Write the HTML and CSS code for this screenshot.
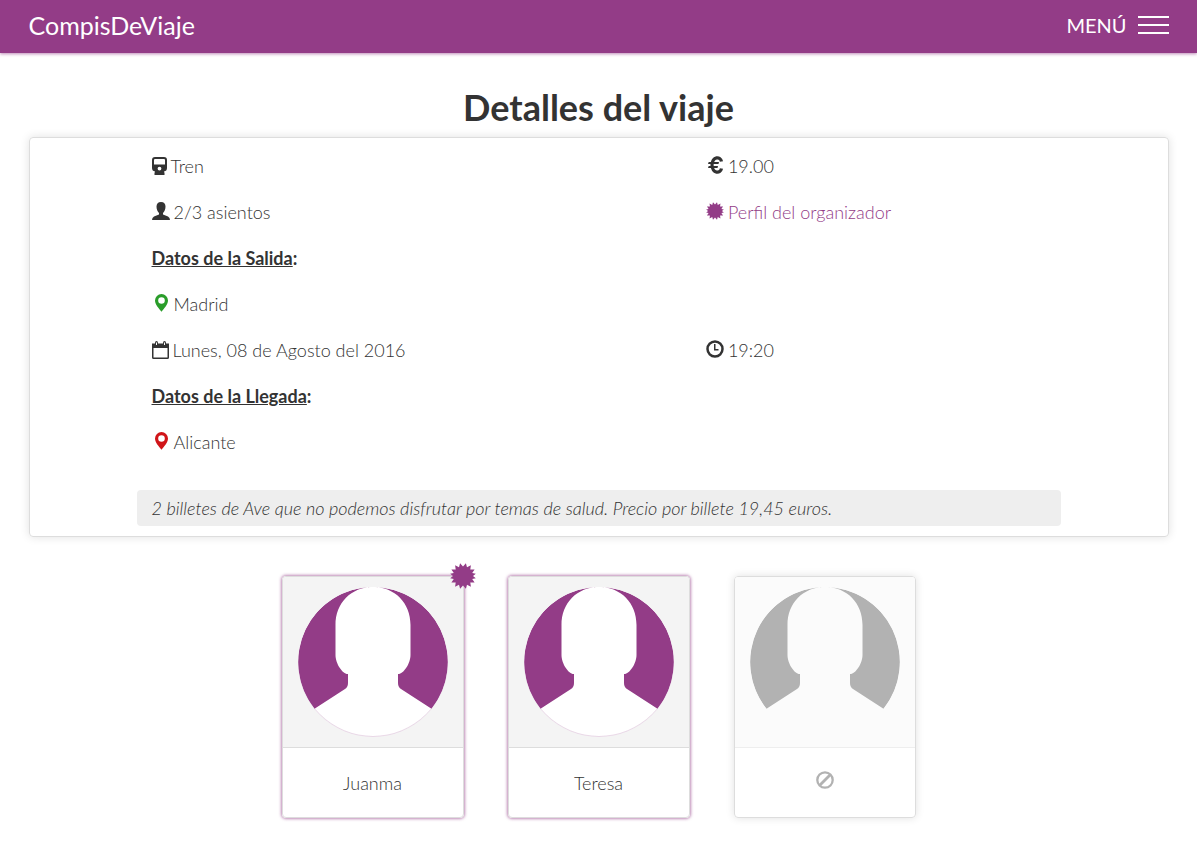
FILE: index.html
```html
<!DOCTYPE html>
<html lang="es">
<head>
<meta charset="utf-8">
<title>CompisDeViaje</title>
<meta name="viewport" content="width=device-width, initial-scale=1">
<link rel="stylesheet" href="styles.css">
</head>
<body>
<svg class="sprite" aria-hidden="true">
  <symbol id="star" viewBox="-13 -13 26 26">
    <path d="M0-9.500L2.900-12.700L4-8.800L7.900-10.800L7.300-6.400L11.600-6.500L9.200-3L12.800-2.200L10 0L12.800 2.200L9.200 3L11.600 6.500L7.300 6.400L7.900 10.800L4 8.800L2.900 12.700L0 9.500L-2.900 12.700L-4 8.800L-7.900 10.800L-7.300 6.400L-11.600 6.500L-9.200 3L-12.800 2.200L-10 0L-12.800-2.200L-9.200-3L-11.600-6.500L-7.300-6.400L-7.900-10.800L-4-8.800L-2.900-12.700Z"/>
  </symbol>
  <symbol id="pin" viewBox="0 0 18 18">
    <path fill-rule="evenodd" d="M9.500 0A6.500 6.500 0 0 0 3 6.500C3 10.500 7 14.500 9.500 17.800C12 14.500 16 10.500 16 6.500A6.500 6.500 0 0 0 9.500 0ZM9.500 3.200A3.300 3.300 0 1 1 9.500 9.800A3.300 3.300 0 1 1 9.500 3.200Z"/>
  </symbol>
  <symbol id="avatar" viewBox="0 0 150 150">
    <path d="M75 0A75 75 0 0 0 16.500 121.700L47 102Q50 100 50 96V87C45 87.500 37.500 77 37.500 68V38C37.500 16 53 0 75 0C97 0 112.500 16 112.500 38V68C112.500 77 105 87.500 100 87V96Q100 100 103 102L133.500 121.700A75 75 0 0 0 75 0Z"/>
  </symbol>
</svg>

<header class="navbar">
  <div class="container navbar-inner">
    <a class="brand" href="#">CompisDeViaje</a>
    <button class="menu" type="button">MENÚ
      <span class="bars"><span class="bar"></span><span class="bar"></span><span class="bar"></span></span>
    </button>
  </div>
</header>

<main class="container">
  <h1 class="title">Detalles del viaje</h1>

  <section class="panel">
    <div class="details">
      <div class="item">
        <svg class="icon icon-train" viewBox="0 0 15 18"><path fill-rule="evenodd" d="M3 0H12Q15 0 15 3V11Q15 14 12 14.500L12.500 16V18H2.500V16L3 14.500Q0 14 0 11V3Q0 0 3 0ZM3 2Q2 2 2 3V7.500H13V3Q13 2 12 2ZM7.500 9.700A1.900 1.900 0 1 0 7.500 13.500A1.900 1.900 0 1 0 7.500 9.700Z"/></svg>
        Tren
      </div>
      <div class="item">
        <svg class="icon" viewBox="0 0 18 18"><path d="M9 0C6 0 4.500 2 4.500 4.500C4.500 7.500 5.500 9.500 7 11V12.500L2 14.500Q0 15.500 0 18H18Q18 15.500 16 14.500L11 12.500V11C12.500 9.500 13.500 7.500 13.500 4.500C13.500 2 12 0 9 0Z"/></svg>
        2/3 asientos
      </div>
      <div class="item side">
        <svg class="icon" viewBox="0 0 18 18"><path fill="none" stroke="currentColor" stroke-width="3.200" d="M15.500 5.500C14.500 .3 6.500 0 6 9C6.500 18 14.500 17.700 15.500 12.500"/><path d="M2.700 6H13L12.500 8H2ZM2.700 10H12L11.500 12H2Z"/></svg>
        19.00
      </div>
      <a class="item side profile" href="#"><svg class="icon"><use href="#star"/></svg>Perfil del organizador</a>
      <h2 class="item heading"><u>Datos de la Salida</u>:</h2>
      <div class="item"><svg class="icon from"><use href="#pin"/></svg>Madrid</div>
      <div class="item">
        <svg class="icon icon-date" viewBox="0 0 17 18"><path fill-rule="evenodd" d="M0 2.500H3V2Q3 0 4.500 0T6 2V2.500H11V2Q11 0 12.500 0T14 2V2.500H17V16.500Q17 18 15.500 18H1.500Q0 18 0 16.500ZM1.500 7V16.500H15.500V7ZM4 1.500V4H5V1.500ZM12 1.500V4H13V1.500Z"/></svg>
        Lunes, 08 de Agosto del 2016
      </div>
      <div class="item side">
        <svg class="icon" viewBox="0 0 18 18"><circle cx="9" cy="9" r="7.500" fill="none" stroke="currentColor" stroke-width="2.500"/><path d="M8 4H9.500V9H12.500V10.500H8Z"/></svg>
        19:20
      </div>
      <h2 class="item heading"><u>Datos de la Llegada</u>:</h2>
      <div class="item"><svg class="icon to"><use href="#pin"/></svg>Alicante</div>
    </div>
    <p class="note">2 billetes de Ave que no podemos disfrutar por temas de salud. Precio por billete 19,45 euros.</p>
  </section>

  <section class="people">
    <article class="card taken">
      <svg class="badge"><use href="#star"/></svg>
      <div class="photo"><svg class="avatar"><use href="#avatar"/></svg></div>
      <div class="name">Juanma</div>
    </article>
    <article class="card taken">
      <div class="photo"><svg class="avatar"><use href="#avatar"/></svg></div>
      <div class="name">Teresa</div>
    </article>
    <article class="card free">
      <div class="photo"><svg class="avatar"><use href="#avatar"/></svg></div>
      <div class="name">
        <svg class="ban" viewBox="0 0 18 18" role="img" aria-label="Libre"><circle cx="9" cy="9" r="7.700" fill="none" stroke="currentColor" stroke-width="2.300"/><path stroke="currentColor" stroke-width="2.800" d="M4 14L14 4"/></svg>
      </div>
    </article>
  </section>
</main>
</body>
</html>
```
FILE: styles.css
```css
* { box-sizing: border-box; }

body {
  margin: 0;
  background: #fff;
  color: #333;
  font: 300 18px/26px Lato, "Open Sans", sans-serif;
  text-rendering: optimizeLegibility;
}

svg { fill: currentColor; }

.sprite {
  position: absolute;
  width: 0;
  height: 0;
}

.container {
  max-width: 1140px;
  margin: 0 auto;
}

.navbar {
  padding: 0 28px;
  background: #933c87;
  color: #fff;
  box-shadow: 0 1px 3px rgba(147, 60, 135, .6);
}

.navbar-inner {
  display: flex;
  align-items: center;
  justify-content: space-between;
  padding: 12px 0 15px;
}

.brand {
  color: inherit;
  font-size: 25px;
  font-weight: 400;
  text-decoration: none;
}

.menu {
  display: flex;
  align-items: center;
  gap: 11px;
  padding: 0;
  border: 0;
  background: none;
  color: inherit;
  font: 400 20px/26px Lato, sans-serif;
}

.bars {
  display: grid;
  gap: 6px;
  width: 31px;
}

.bar {
  height: 2px;
  background: #fff;
}

main { padding-bottom: 40px; }

.title {
  margin: 0;
  padding: 34px 0 10px;
  font-size: 36px;
  font-weight: 700;
  line-height: 40px;
  text-align: center;
}

.panel {
  padding: 5px 107px 10px;
  border: 1px solid #ddd;
  border-radius: 4px;
  box-shadow: 0 0 10px rgba(0, 0, 0, .12);
}

.details {
  display: grid;
  grid-template-columns: 3fr 2fr;
}

.item {
  display: flex;
  grid-column: 1;
  align-items: center;
  gap: 4px;
  margin: 0;
  padding: 10px 15px;
}

.side { grid-column: 2; }

.item:nth-child(1), .item:nth-child(3) { grid-row: 1; }
.item:nth-child(2), .item:nth-child(4) { grid-row: 2; }
.item:nth-child(7), .item:nth-child(8) { grid-row: 5; }

.heading {
  gap: 0;
  font-size: 18px;
  font-weight: 700;
}

.profile {
  color: #933c87;
  text-decoration: none;
}

.icon {
  flex: none;
  width: 18px;
  height: 18px;
  margin-bottom: 2px;
}

.icon-train {
  width: 15px;
  margin-bottom: 0;
}

.icon-date {
  width: 17px;
  margin-bottom: 0;
}

.from { color: #2a9d2a; }
.to { color: #d01519; }

.note {
  margin: 25px 0 0;
  padding: 5px 15px;
  border-radius: 4px;
  background: #eee;
  font-style: italic;
}

.people {
  display: flex;
  flex-wrap: wrap;
  justify-content: center;
  gap: 44px;
  padding-top: 39px;
}

.card {
  position: relative;
  width: 182px;
  border: 1px solid #ddd;
  border-radius: 4px;
  box-shadow: 0 0 8px rgba(0, 0, 0, .12);
}

.taken { box-shadow: 0 0 3px 1px rgba(147, 60, 135, .6); }

.photo {
  padding: 10px 15px;
  border-bottom: 1px solid #ddd;
  border-radius: 3px 3px 0 0;
  background: #f4f4f4;
}

.avatar {
  display: block;
  width: 150px;
  height: 150px;
  border-radius: 50%;
  color: #933c87;
}

.taken .avatar {
  background: #fff;
  box-shadow: inset 0 -1px 0 rgba(147, 60, 135, .2);
}

.name {
  display: flex;
  align-items: center;
  justify-content: center;
  height: 69px;
}

.badge {
  position: absolute;
  top: -14px;
  right: -13px;
  width: 26px;
  height: 26px;
  color: #933c87;
}

.free .photo {
  border-color: #eee;
  background: #fbfbfb;
}

.free .avatar, .ban { color: #b2b2b2; }

.ban {
  width: 18px;
  height: 18px;
  margin-bottom: 5px;
}

@media (max-width: 900px) {
  .panel {
    padding-right: 15px;
    padding-left: 15px;
  }
}
```
